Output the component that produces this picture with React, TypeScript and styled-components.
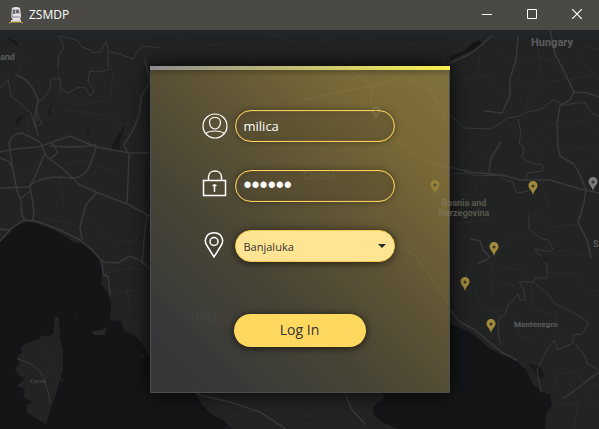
import React, { useState } from "react";
import styled, { createGlobalStyle } from "styled-components";

const GlobalStyle = createGlobalStyle`
  *, *::before, *::after { box-sizing: border-box; }
  body {
    margin: 0;
    background: #131517;
    font-family: "Open Sans", "Noto Sans", sans-serif;
  }
`;

const Window = styled.div`
  display: flex;
  flex-direction: column;
  min-height: 100vh;
`;

const TitleBar = styled.header`
  display: flex;
  align-items: center;
  height: 30px;
  padding-left: 8px;
  background: #4b4946;
  color: #ffffff;
`;

const Title = styled.h1`
  flex: 1;
  margin: 0 0 0 5px;
  font-size: 12px;
  line-height: 16px;
  font-weight: 400;
`;

const WindowButton = styled.button`
  display: grid;
  place-items: center;
  width: 45px;
  height: 30px;
  padding: 0 0 2px;
  border: 0;
  background: transparent;
  color: #ffffff;

  &:hover { background: #5e5c59; }
`;

const Stage = styled.main`
  position: relative;
  flex: 1;
  display: grid;
  place-items: center;
  padding: 36px 0;
  overflow: hidden;
`;

const MapLayer = styled.svg`
  position: absolute;
  inset: 0;
  width: 100%;
  height: 100%;
  pointer-events: none;
`;

const Card = styled.form`
  position: relative;
  display: flex;
  flex-direction: column;
  align-items: center;
  width: 50%;
  min-width: 300px;
  padding-bottom: 45px;
  border: solid #4a4e50;
  border-width: 0 1px 1px;
  background: linear-gradient(45deg,
    rgba(54, 56, 58, 0.96) 10%,
    rgba(75, 71, 54, 0.96) 37%,
    rgba(97, 86, 54, 0.96) 57%,
    rgba(125, 108, 56, 0.95) 80%,
    rgba(134, 119, 65, 0.94) 100%);
  box-shadow: 0 0 20px rgba(0, 0, 0, 0.85);
`;

const Accent = styled.div`
  align-self: stretch;
  height: 4px;
  margin: 0 -1px;
  background: linear-gradient(90deg, #8d8c8e, #c9c471 55%, #f8f04f);
  box-shadow: 0 1px 6px rgba(0, 0, 0, 0.45);
`;

const Fields = styled.div`
  display: grid;
  gap: 28px;
  margin: 40px 0 52px;
`;

const Field = styled.div`
  display: grid;
  grid-template-columns: 26px 160px;
  column-gap: 7px;
  align-items: center;
  padding-right: 3px;
`;

const FieldLabel = styled.label`
  display: grid;
  place-items: center;
  color: #ffffff;
`;

const TextInput = styled.input`
  width: 100%;
  height: 32px;
  padding: 0 8px 1px;
  border: 1px solid #f8d05a;
  border-radius: 16px;
  outline: 0;
  background: rgba(76, 67, 42, 0.3);
  box-shadow: 0 0 7px rgba(0, 0, 0, 0.35), inset 0 0 1px #f4cc58, inset 0 0 6px rgba(0, 0, 0, 0.12);
  color: #ffffff;
  font-family: inherit;
  font-size: 13px;
  line-height: 20px;

  &[type="password"] {
    font-family: "Liberation Sans", sans-serif;
    font-size: 23px;
  }
`;

const SelectWrap = styled.div`
  position: relative;
  height: 32px;
`;

const Select = styled.select`
  appearance: none;
  width: 100%;
  height: 100%;
  padding: 2px 24px 0 8px;
  border: 1px solid #f5cb50;
  border-radius: 16px;
  outline: 0;
  background: #ffe593;
  box-shadow: 0 1px 8px rgba(0, 0, 0, 0.65);
  color: #333333;
  font-family: inherit;
  font-size: 11px;
  line-height: 20px;
`;

const Arrow = styled.svg`
  position: absolute;
  top: 14px;
  right: 9px;
  pointer-events: none;
`;

const Submit = styled.button`
  width: 132px;
  height: 33px;
  padding: 0 0 2px;
  border: 0;
  border-radius: 17px;
  background: #ffd95f;
  box-shadow: 0 1px 9px rgba(0, 0, 0, 0.7);
  color: #333333;
  font-family: inherit;
  font-size: 14px;
  line-height: 20px;
`;

type PinProps = { x: number; y: number; color?: string };

// Marker whose tip rests on (x, y).
const Pin = ({ x, y, color = "#a28a3d" }: PinProps) => (
  <g transform={`translate(${x} ${y})`}>
    <path d="M0 0 C-1-5-4.500-6-4.500-9.500 A4.500 4.500 0 0 1 4.500-9.500 C4.500-6 1-5 0 0Z" fill={color} />
    <circle cx="0" cy="-9" r="1.500" fill="#38352a" />
  </g>
);

const highways = [
  "M0 152 L14 149 L38 147 L50 143 L70 136 L96 147 L130 153 L150 153 L190 160",
  "M9 143 Q12 133 22 133 L40 142 L47 157 L62 168 L80 185 L96 192 L127 204 L150 216",
  "M9 143 L12 165 L17 190 L21 201 L22 215",
  "M0 158 L8 161 L13 168",
  "M0 188 L28 187 Q38 178 55 177 L75 178 Q86 176 90 165 L96 148",
  "M44 155 L38 170 L30 187 L33 203 L34 215",
  "M53 143 L58 153 L51 158 M50 146 L70 147 Q82 147 96 145",
  "M21 198 L29 192 M97 192 L86 205 L83 215",
  "M145 60 L150 82 L141 97 L139 115 L134 128 L124 145 L129 155 L127 204",
  "M16 75 Q31 79 38 100 L34 120 L38 135",
  "M0 229 L9 230 L24 220 L36 221 L60 230 L80 240 L92 250 L103 262 L118 263 L130 256 L143 262 L150 269",
  "M0 241 L10 230 M22 215 L25 220 M34 215 L32 221 M83 215 L80 228 L82 239",
  "M102 260 L103 274 L108 277 L110 295",
  "M147 215 L144 239 L142 264",
  "M450 167 L470 172 L502 175 L520 180 L550 180 L580 189 L599 193",
  "M550 30 L555 54 L565 73 L574 92 L570 100 L560 106 L557 125 L558 148 L560 156 L574 164 L580 175 L586 190 L584 202 L580 218",
  "M574 92 L588 93 L599 97",
  "M450 63 L470 54 L492 36",
  "M518 37 L516 60 L510 79 L510 95 L502 113 L485 111",
  "M501 142 L491 158 L489 172",
  "M580 215 L578 222 L587 240 L591 257",
  "M471 239 L480 241 L483 250 L490 257 L486 260 L478 263",
  "M599 372 L592 377 L578 388 L564 398",
  "M450 310 L460 322 L475 330 L488 341 L503 353 L516 360",
  "M170 370 L180 383 L200 395 L230 402 L260 412 L280 425 L285 429",
  "M300 365 L330 389 L344 391 L352 410 L365 424",
  "M350 70 L372 86 L370 115 L400 140 L430 162 L450 168",
  "M400 75 L430 90 L446 117",
  "M300 100 L340 92 L372 86 L402 77",
  "M170 175 L240 170 L300 155 L345 150 L372 125",
  "M360 220 L385 235 L415 255 L450 304",
];

const borders = [
  "M58 36 L70 38 L78 41 L82 47 L91 50 L93 53 L100 52 L106 42 L109 52 L120 54 L133 59 L138 50 L143 46 L160 48",
  "M108 52 L108 70 L98 72 L90 71 L88 81 L94 91 L90 96 L85 87 L77 88 L68 93 L61 89 L60 78 L51 79 L50 89 L43 99 L37 103 L37 121",
  "M60 38 L64 48 L59 55 L58 67",
  "M0 88 L8 79 L11 96 L23 106 L31 113 L35 128 L42 124 L37 113",
  "M450 116 L456 120 L463 128 L490 129 L501 123 L508 118 L520 116 L527 112 L540 110 L553 100 L565 105 L575 103 L585 103 L593 114 L599 116",
  "M518 119 L521 133 L519 143 L524 147 L522 158 L532 163 L543 165 L543 171 L527 173 L526 181",
  "M450 174 L468 173 L477 176 L500 175 L505 180 L513 182 L516 193 L529 191",
  "M529 215 L529 229 L540 238 L548 240 L553 249 L549 252 L535 249 L547 265 L547 278 L535 278 L533 282 L519 282 L524 290 L525 300 L520 300 L518 294 L508 305 L505 315 L499 318 L498 334 L501 345",
  "M533 282 L549 295 L555 304 L570 311 L579 316 L589 323 L582 334 L573 335 L573 343 L558 350 L554 340 L545 353 L537 370 L541 392",
  "M576 345 L584 354 L587 363 L599 371",
  "M18 359 L30 363 L40 371 L45 382 L48 391 L50 402",
];

const minorRoads = [
  "M18 75 L25 57 L18 42 L14 38",
  "M57 55 L60 95 L80 105 L110 100 L113 75 L109 57",
  "M65 110 L105 115 L125 125 L138 120",
  "M28 133 L27 120 L45 110 L56 103",
  "M10 180 L31 173 L38 163 L60 180 L64 205",
  "M64 165 L83 160 L115 172 L126 184",
  "M94 222 L104 235 L116 243 L135 240 L145 225",
  "M50 220 L58 221 L73 223 M105 273 L130 268 L150 271",
  "M113 265 L125 280 L129 305 L120 317 L135 325 L143 345",
  "M110 295 L140 289 L150 295",
  "M45 350 L57 371 L47 371 L43 390 M57 372 L63 382",
  "M463 80 L489 75 L498 91 L511 96 M480 55 L478 77 L458 90",
  "M497 53 L520 62 L540 57 L555 62 L565 77",
  "M538 45 L540 72 L530 90 L525 112",
  "M516 82 L535 90 L550 81 L570 79 L590 75",
  "M575 60 L583 47 L599 49 M582 62 L599 79",
  "M559 120 L540 131 L525 145 M558 128 L580 120 L599 133",
  "M551 137 L535 150 L540 160 M561 153 L579 147 L599 153",
  "M580 175 L595 155 M540 180 L549 206 L535 215",
  "M460 155 L472 147 L488 157 M458 194 L475 195 L478 185",
  "M450 223 L473 222 L490 218 M495 257 L508 239 L526 235",
  "M480 263 L460 280 L450 290 M491 258 L494 277 L491 295",
  "M500 267 L521 270 L528 280 M502 283 L514 285",
  "M473 282 L480 304 L490 311 L507 310",
  "M540 220 L556 227 L575 224 L584 231",
  "M551 253 L568 250 L585 256 L599 250",
  "M548 273 L574 273 L587 290 L599 291",
  "M531 285 L533 310 L555 314 L563 340",
  "M513 315 L520 337 L533 338 L547 323",
  "M553 390 L559 374 L574 372 L588 385 L599 386",
  "M555 403 L578 405 L590 398 L599 404 M574 429 L578 405 L570 381",
  "M226 429 L240 410 L265 413 L276 397 M288 395 L305 416 L322 418",
  "M180 36 L197 48 L228 42 L255 60 M270 34 L307 48 L330 38",
  "M392 55 L414 42 L440 51 L447 66 M350 58 L361 43 L374 35",
];

const RegionMap = () => (
  <MapLayer viewBox="0 30 599 399" preserveAspectRatio="xMidYMid slice" aria-hidden="true">
    <rect y="30" width="599" height="399" fill="#222323" />
    <rect y="30" width="599" height="6" fill="#222528" />
    <g fill="#131517">
      <path d="M0 242 L10 232 L18 225 L28 222 L38 224 L52 229 L66 237 L75 243 L82 243 L91 250 L98 258 L102 270 L101 284 L108 293 L111 305 L110 320 L121 321 L124 331 L134 335 L142 343 L147 353 L180 377 L195 393 L202 405 L213 415 L224 421 L232 429 L0 429Z" />
      <path d="M398 429 L382 422 L374 415 L373 407 L386 396 L340 365 L300 300 L300 250 L335 235 L385 275 L450 324 L470 332 L488 347 L501 355 L512 357 L526 370 L532 383 L541 391 L550 395 L552 405 L546 414 L545 429Z" />
      <path d="M450 57 L464 51 L473 43 L480 40 L482 44 L475 49 L464 54 L450 60Z" />
      <path d="M528 364 L540 366 L545 376 L541 378 L533 371Z M112 145 L126 123 L120 141 L120 150 L112 150Z" opacity=".7" />
      <path d="M50 105 L54 103 L50 111 L53 117 L48 113Z M88 127 L90 134 L85 136Z M15 120 L26 113 L17 126Z M5 37 L17 41 L18 46Z M538 256 L547 259 L544 263Z" opacity=".6" />
    </g>
    <path d="M54 317 L59 317 L60 338 L63 350 L63 370 L60 380 L56 394 L52 405 L46 424 L34 417 L27 413 L27 405 L32 402 L23 397 L25 389 L17 386 L24 379 L18 374 L15 369 L20 363 L16 358 L23 352 L20 348 L29 342 L38 340 L42 335 L49 337 L54 333Z" fill="#222323" />
    <path d="M91 331 L102 330 L106 327 L105 335 L94 335Z M139 356 L144 355 L144 358Z M76 313 L78 313 L77 316Z" fill="#25272a" />
    <g fill="none" strokeLinejoin="round" strokeLinecap="round">
      <g stroke="#292b2b" strokeWidth="1">{minorRoads.map((d) => <path key={d} d={d} />)}</g>
      <g stroke="#393b3c" strokeWidth="1" strokeDasharray="3 1">{borders.map((d) => <path key={d} d={d} />)}</g>
      <g stroke="#37393a" strokeWidth="1.500">{highways.map((d) => <path key={d} d={d} />)}</g>
    </g>
    <g fill="#5b5d5f" fontFamily="Roboto, sans-serif" fontWeight="700">
      <text x="531" y="46" fontSize="11">Hungary</text>
      <text x="0" y="60" fontSize="9">and</text>
      <text x="514" y="327" fontSize="8">Montenegro</text>
      <text x="593" y="247" fontSize="9">S</text>
      <text x="30" y="383" fontSize="6" fill="#414345">Corse</text>
    </g>
    <Pin x={533} y={195} />
    <Pin x={494} y={256} />
    <Pin x={465} y={291} />
    <Pin x={491} y={333} />
    <Pin x={593} y={191} color="#77797a" />
  </MapLayer>
);

// Places and roads that stay visible through the translucent card.
const MapOverlay = () => (
  <MapLayer viewBox="0 30 599 399" preserveAspectRatio="xMidYMid slice" aria-hidden="true">
    <g fill="none" stroke="#c5b888" strokeWidth="1.500" opacity=".06">
      <path d="M350 70 L372 86 L370 106 M396 142 L430 162 L449 168" />
      <path d="M405 75 L430 90 L446 117" />
      <path d="M302 100 L340 92 L372 86 L402 77" />
      <path d="M398 245 L415 255 L449 304" />
    </g>
    <g opacity=".5"><Pin x={435} y={194} color="#b89b43" /></g>
    <g opacity=".2"><Pin x={376} y={120} color="#a9a58e" /></g>
    <g fontFamily="Roboto, sans-serif" fontWeight="700" textAnchor="middle">
      <g fill="#85826f" fontSize="9" opacity=".55">
        <text x="464" y="206">Bosnia and</text>
        <text x="464" y="216">Herzegovina</text>
      </g>
      <text x="319" y="179" fontSize="10" fill="#8a8468" opacity=".2">Croatia</text>
      <text x="204" y="321" fontSize="14" fill="#5f6264" opacity=".15">Italy</text>
    </g>
  </MapLayer>
);

const TrainIcon = () => (
  <svg width="16" height="18" viewBox="0 0 16 18" aria-hidden="true">
    <path d="M4 2 Q8 0 12 2 L13 10 L12 14 H5 L3 11Z" fill="#e5e3e3" />
    <path d="M5 3 H11 L12 8 H5Z" fill="#b8b6ba" />
    <path d="M5 4 H7 V8 H5Z M8 4 H11 V7 H8Z" fill="#69676d" />
    <path d="M4 3 V12 M4 11 H12" stroke="#858188" />
    <path d="M3 15 H13" stroke="#dddddd" strokeWidth="2" />
    <path d="M1 17 L4 16 H12 L15 17" fill="none" stroke="#c9a43a" />
  </svg>
);

const UserIcon = () => (
  <svg width="26" height="26" viewBox="0 0 26 26" fill="none" stroke="currentColor" strokeWidth="1.200" aria-hidden="true">
    <circle cx="13" cy="13" r="12" />
    <path d="M13 4.500 C9 4.500 7.500 7 7.500 9.500 C7.500 13 10 16 13 16 C16 16 18.500 13 18.500 9.500 C18.500 7 17 4.500 13 4.500Z" />
    <path d="M4 20.500 C6 18.500 9 18 13 18 C17 18 20 18.500 22 20.500" />
  </svg>
);

const LockIcon = () => (
  <svg width="26" height="32" viewBox="0 0 26 32" fill="none" stroke="currentColor" aria-hidden="true">
    <path d="M6.500 11 V7 C6.500-1 19.500-1 19.500 7 V11" strokeWidth="1.500" />
    <path d="M1.500 10.500 H23.500 V25.500 H1.500Z" strokeWidth="1.500" />
    <path d="M12.500 14 V22 M10.500 15.500 H14.500" strokeWidth="1.500" />
  </svg>
);

const PlaceIcon = () => (
  <svg width="22" height="30" viewBox="0 0 22 30" fill="none" stroke="currentColor" strokeWidth="1.500" aria-hidden="true">
    <path d="M10 26 L3.500 15.500 C1 12 1 10.500 1.500 8.500 C3.500-.5 16.500-.5 18.500 8.500 C19 10.500 19 12 16.500 15.500Z" strokeLinejoin="round" />
    <circle cx="10" cy="10.500" r="4" />
  </svg>
);

export default function App() {
  const [user, setUser] = useState("milica");
  const [password, setPassword] = useState("secret");
  const [city, setCity] = useState("Banjaluka");

  return (
    <>
      <GlobalStyle />
      <Window>
        <TitleBar>
          <TrainIcon />
          <Title>ZSMDP</Title>
          <WindowButton type="button" aria-label="Minimize">
            <svg width="10" height="10"><path d="M0 5.500 H10" stroke="currentColor" /></svg>
          </WindowButton>
          <WindowButton type="button" aria-label="Maximize">
            <svg width="10" height="10"><path d="M.5 .5 H9.500 V9.500 H.5Z" fill="none" stroke="currentColor" /></svg>
          </WindowButton>
          <WindowButton type="button" aria-label="Close">
            <svg width="10" height="10"><path d="M0 0 L10 10 M10 0 L0 10" stroke="currentColor" strokeWidth="1.200" /></svg>
          </WindowButton>
        </TitleBar>
        <Stage>
          <RegionMap />
          <Card onSubmit={(e) => e.preventDefault()}>
            <Accent />
            <Fields>
              <Field>
                <FieldLabel htmlFor="user" aria-label="User name"><UserIcon /></FieldLabel>
                <TextInput id="user" type="text" value={user} onChange={(e) => setUser(e.target.value)} />
              </Field>
              <Field>
                <FieldLabel htmlFor="password" aria-label="Password"><LockIcon /></FieldLabel>
                <TextInput id="password" type="password" value={password} onChange={(e) => setPassword(e.target.value)} />
              </Field>
              <Field>
                <FieldLabel htmlFor="city" aria-label="City"><PlaceIcon /></FieldLabel>
                <SelectWrap>
                  <Select id="city" value={city} onChange={(e) => setCity(e.target.value)}>
                    <option>Banjaluka</option>
                  </Select>
                  <Arrow width="8" height="4" viewBox="0 0 8 4" aria-hidden="true">
                    <path d="M0 0 H8 L4 4Z" fill="#222b2b" />
                  </Arrow>
                </SelectWrap>
              </Field>
            </Fields>
            <Submit type="submit">Log In</Submit>
          </Card>
          <MapOverlay />
        </Stage>
      </Window>
    </>
  );
}
